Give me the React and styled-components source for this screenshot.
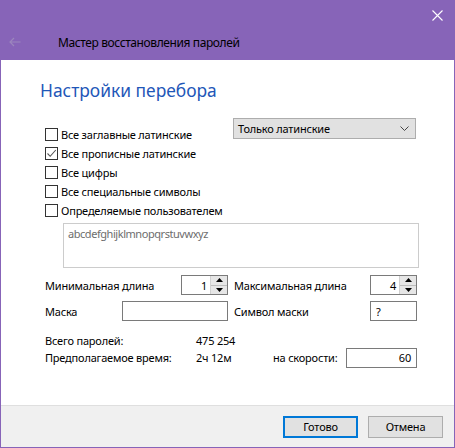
import React from 'react'
import styled, { createGlobalStyle } from 'styled-components'

const GlobalStyle = createGlobalStyle`
  html, body {
    margin: 0;
    padding: 0;
    background: #ffffff;
  }
  body {
    font-family: "Noto Sans", "Open Sans", sans-serif;
    font-size: 11px;
    letter-spacing: -0.2px;
    color: #000;
  }
`

const Window = styled.div`
  width: 455px;
  height: 448px;
  box-sizing: border-box;
  border: 1px solid #8764b8;
  border-top: none;
  display: flex;
  flex-direction: column;
  background: #fff;
`

const TitleBar = styled.div`
  height: 60px;
  background: #8764b8;
  margin: 0 -1px;
  display: flex;
  flex-direction: column;
`

const CaptionRow = styled.div`
  height: 30px;
  display: flex;
  justify-content: flex-end;
`

const CloseButton = styled.div`
  width: 36px;
  height: 30px;
  display: flex;
  align-items: center;
  justify-content: center;
`

const NavRow = styled.div`
  height: 24px;
  display: flex;
  align-items: center;
  padding-left: 9px;
`

const Title = styled.span`
  margin-left: 37px;
  font-size: 12px;
  letter-spacing: -0.4px;
  color: #000;
`

const Content = styled.div`
  flex: 1;
  padding: 20px 0 0 39px;
  display: flex;
  flex-direction: column;
`

const Heading = styled.h1`
  margin: 0;
  font-size: 17.4px;
  font-weight: normal;
  letter-spacing: 0;
  color: #1f57b8;
  line-height: 21px;
`

const OptionsArea = styled.div`
  margin-top: 17px;
  display: flex;
`

const CheckList = styled.div`
  width: 188px;
  padding-left: 5px;
  padding-top: 7px;
  display: flex;
  flex-direction: column;
`

const CheckRow = styled.label`
  height: 19px;
  display: flex;
  align-items: center;
  gap: 3px;
  white-space: nowrap;
`

const Box = styled.span`
  width: 11px;
  height: 11px;
  border: 1px solid #333;
  background: #fff;
  display: flex;
  align-items: center;
  justify-content: center;
  flex-shrink: 0;
`

const Select = styled.div`
  width: 171px;
  height: 19px;
  border: 1px solid #adadad;
  background: #e1e1e1;
  display: flex;
  align-items: center;
  justify-content: space-between;
  padding: 0 6px 0 4px;
  box-sizing: content-box;
`

const TextArea = styled.div`
  margin: 3px 0 0 23px;
  width: 346px;
  height: 39px;
  border: 1px solid #cccccc;
  padding: 2px 4px;
  color: #6d6d6d;
  font-size: 11px;
  letter-spacing: -0.45px;
`

const FormRow = styled.div`
  display: flex;
  align-items: center;
  padding-left: 5px;
  margin-top: ${p => p.$top}px;
`

const Label = styled.span`
  width: ${p => p.$w}px;
  flex-shrink: 0;
  white-space: nowrap;
`

const Field = styled.div`
  width: ${p => p.$w}px;
  height: 18px;
  border: 1px solid #7a7a7a;
  background: #fff;
  display: flex;
  align-items: center;
  justify-content: ${p => (p.$right ? 'flex-end' : 'flex-start')};
  padding: 0 5px;
  box-sizing: content-box;
  flex-shrink: 0;
`

const SpinWrap = styled.div`
  width: 45px;
  height: 18px;
  border: 1px solid #7a7a7a;
  display: flex;
  flex-shrink: 0;
`

const SpinValue = styled.div`
  flex: 1;
  display: flex;
  align-items: center;
  justify-content: flex-end;
  padding-right: 3px;
`

const SpinButtons = styled.div`
  width: 16px;
  display: flex;
  flex-direction: column;
  background: #e6e6e6;
  border-left: 1px solid #d0d0d0;
`

const SpinButton = styled.div`
  flex: 1;
  display: flex;
  align-items: center;
  justify-content: center;
  & + & {
    border-top: 1px solid #bdbdbd;
  }
`

const Gap = styled.span`
  width: 6px;
  flex-shrink: 0;
`

const Stats = styled.div`
  margin-top: 11px;
  padding-left: 5px;
  display: grid;
  grid-template-columns: 151px 77px 73px 71px;
  grid-auto-rows: 17px;
  align-items: center;
`

const Footer = styled.div`
  height: 41px;
  background: #f0f0f0;
  border-top: 1px solid #dfdfdf;
  display: flex;
  align-items: center;
  justify-content: flex-end;
  gap: 10px;
  padding-right: 11px;
`

const Button = styled.div`
  width: ${p => (p.$primary ? 71 : 73)}px;
  height: ${p => (p.$primary ? 18 : 20)}px;
  border: ${p => (p.$primary ? '2px solid #0078d7' : '1px solid #adadad')};
  background: #e1e1e1;
  display: flex;
  align-items: center;
  justify-content: center;
`

const Check = () => (
  <svg width="11" height="11" viewBox="0 0 11 11">
    <path d="M1.5 5.5 L4.2 8.3 L9.8 2" fill="none" stroke="#555" strokeWidth="1.1" />
  </svg>
)

const Arrow = ({ up }) => (
  <svg width="7" height="4" viewBox="0 0 7 4">
    <path d={up ? 'M0 4 L3.5 0 L7 4 Z' : 'M0 0 L3.5 4 L7 0 Z'} fill="#000" />
  </svg>
)

const Spin = ({ value }) => (
  <SpinWrap>
    <SpinValue>{value}</SpinValue>
    <SpinButtons>
      <SpinButton><Arrow up /></SpinButton>
      <SpinButton><Arrow /></SpinButton>
    </SpinButtons>
  </SpinWrap>
)

const options = [
  { text: 'Все заглавные латинские', checked: false },
  { text: 'Все прописные латинские', checked: true },
  { text: 'Все цифры', checked: false },
  { text: 'Все специальные символы', checked: false },
  { text: 'Определяемые пользователем', checked: false },
]

const App = () => {
  return (
    <>
      <GlobalStyle />
      <Window>
        <TitleBar>
          <CaptionRow>
            <CloseButton>
              <svg width="11" height="11" viewBox="0 0 11 11">
                <path d="M0.5 0.5 L10.5 10.5 M10.5 0.5 L0.5 10.5" stroke="#fff" strokeWidth="1.1" />
              </svg>
            </CloseButton>
          </CaptionRow>
          <NavRow>
            <svg width="12" height="10" viewBox="0 0 12 10">
              <path d="M11.5 5 H1 M5 1 L1 5 L5 9" fill="none" stroke="#9b86bd" strokeWidth="1.2" />
            </svg>
            <Title>Мастер восстановления паролей</Title>
          </NavRow>
        </TitleBar>
        <Content>
          <Heading>Настройки перебора</Heading>
          <OptionsArea>
            <CheckList>
              {options.map((item, index) => (
                <CheckRow key={index}>
                  <Box>{item.checked && <Check />}</Box>
                  {item.text}
                </CheckRow>
              ))}
            </CheckList>
            <Select>
              <span>Только латинские</span>
              <svg width="9" height="6" viewBox="0 0 9 6">
                <path d="M0.5 0.5 L4.5 4.5 L8.5 0.5" fill="none" stroke="#444" strokeWidth="1" />
              </svg>
            </Select>
          </OptionsArea>
          <TextArea>abcdefghijklmnopqrstuvwxyz</TextArea>
          <FormRow $top={7}>
            <Label $w={136}>Минимальная длина</Label>
            <Spin value="1" />
            <Gap />
            <Label $w={136}>Максимальная длина</Label>
            <Spin value="4" />
          </FormRow>
          <FormRow $top={6}>
            <Label $w={77}>Маска</Label>
            <Field $w={94} />
            <Gap />
            <Label $w={136}>Символ маски</Label>
            <Field $w={35}>?</Field>
          </FormRow>
          <Stats>
            <span>Всего паролей:</span>
            <span>475 254</span>
            <span />
            <span />
            <span>Предполагаемое время:</span>
            <span>2ч 12м</span>
            <span>на скорости:</span>
            <Field $w={59} $right>60</Field>
          </Stats>
        </Content>
        <Footer>
          <Button $primary>Готово</Button>
          <Button>Отмена</Button>
        </Footer>
      </Window>
    </>
  )
}

export default App
